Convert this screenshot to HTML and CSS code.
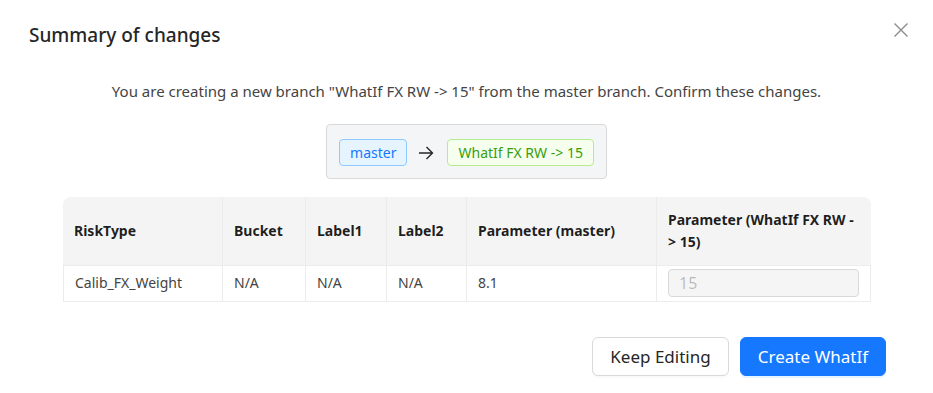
FILE: index.html
```html
<!DOCTYPE html>
<html lang="en">
<head>
    <meta charset="UTF-8">
    <meta name="viewport" content="width=device-width, initial-scale=1.0">
    <title>Summary of changes</title>
    <link rel="stylesheet" href="styles.css">
</head>
<body>

    <div class="modal">
        <div class="modal-header">
            <div class="modal-title">Summary of changes</div>
            <span class="close">
                <svg width="16" height="16" viewBox="0 0 16 16"><path d="M1.5 1.5 L14.5 14.5 M14.5 1.5 L1.5 14.5" stroke="#8c8c8c" stroke-width="1.4" fill="none"/></svg>
            </span>
        </div>

        <p class="intro">You are creating a new branch "WhatIf FX RW -&gt; 15" from the master branch. Confirm these changes.</p>

        <div class="branch-box">
            <span class="tag tag-blue">master</span>
            <svg class="arrow" width="16" height="16" viewBox="0 0 16 16"><path d="M1 8 H14.5 M8.5 2 L14.5 8 L8.5 14" stroke="#262626" stroke-width="1.4" fill="none"/></svg>
            <span class="tag tag-green">WhatIf FX RW -&gt; 15</span>
        </div>

        <table class="changes">
            <thead>
                <tr>
                    <th class="c1">RiskType</th>
                    <th class="c2">Bucket</th>
                    <th class="c3">Label1</th>
                    <th class="c4">Label2</th>
                    <th class="c5">Parameter (master)</th>
                    <th class="c6">Parameter (WhatIf FX RW -&gt; 15)</th>
                </tr>
            </thead>
            <tbody>
                <tr>
                    <td>Calib_FX_Weight</td>
                    <td>N/A</td>
                    <td>N/A</td>
                    <td>N/A</td>
                    <td>8.1</td>
                    <td class="input-cell"><input class="value" type="text" value="15" disabled></td>
                </tr>
            </tbody>
        </table>

        <div class="footer">
            <button class="btn" type="button">Keep Editing</button>
            <button class="btn btn-primary" type="button">Create WhatIf</button>
        </div>
    </div>

</body>
</html>
```

FILE: styles.css
```css
body {
    margin: 0;
    padding: 0;
    background: #fff;
    font-family: "Noto Sans", "Open Sans", sans-serif;
    color: rgba(0, 0, 0, 0.88);
    font-size: 14px;
}

.modal {
    width: 933px;
    height: 393px;
    box-sizing: border-box;
    padding: 20px 47px 0 29px;
    display: flex;
    flex-direction: column;
}

.modal-header {
    display: flex;
    justify-content: space-between;
    align-items: center;
    height: 30px;
}

.modal-title {
    font-size: 19px;
    font-weight: 500;
    color: #262626;
}

.close {
    display: flex;
    margin-right: -23px;
    margin-top: -10px;
}

.intro {
    margin: 30px 0 0 18px;
    text-align: center;
    font-size: 15px;
    color: #444;
    line-height: 22px;
}

.branch-box {
    align-self: center;
    margin: 22px 0 0 18px;
    display: flex;
    align-items: center;
    padding: 14px 12px 12px;
    background: #f4f5f7;
    border: 1px solid #d9d9d9;
    border-radius: 4px;
}

.arrow {
    margin: 0 13px 0 11px;
}

.tag {
    display: inline-block;
    height: 25px;
    line-height: 25px;
    padding: 0 10px;
    border-radius: 4px;
    font-size: 14px;
}

.tag-blue {
    background: #e6f4ff;
    border: 1px solid #91caff;
    color: #1677ff;
}

.tag-green {
    background: #f6ffed;
    border: 1px solid #b7eb8f;
    color: #389e0d;
}

.changes {
    margin: 18px 0 0 34px;
    width: 808px;
    border-collapse: separate;
    border-spacing: 0;
    font-size: 14px;
}

.changes th {
    background: #f4f4f4;
    text-align: left;
    font-weight: 700;
    line-height: 22px;
    padding: 12px 11px;
    border-bottom: 1px solid #ececec;
    border-right: 1px solid #ececec;
}

.changes th:last-child {
    border-right: none;
    border-top-right-radius: 8px;
}

.changes th:first-child {
    border-top-left-radius: 8px;
}

.changes td {
    line-height: 22px;
    padding: 6px 11px 7px;
    color: #444;
    border-bottom: 1px solid #ececec;
    border-right: 1px solid #ececec;
}

.changes td:first-child {
    border-left: 1px solid #ececec;
}

.c1 { width: 137px; }
.c2 { width: 60px; }
.c3 { width: 58px; }
.c4 { width: 57px; }
.c5 { width: 167px; }

.changes td.input-cell {
    padding: 3px 11px 4px;
}

.value {
    box-sizing: border-box;
    width: 100%;
    height: 28px;
    padding: 0 10px;
    border: 1px solid #d9d9d9;
    border-radius: 4px;
    background: #f5f5f5;
    color: rgba(0, 0, 0, 0.25);
    font-family: inherit;
    font-size: 16px;
}

.footer {
    display: flex;
    justify-content: flex-end;
    gap: 11px;
    margin-top: 35px;
}

.btn {
    height: 39px;
    padding: 0 17px;
    font-family: inherit;
    font-size: 17px;
    border-radius: 6px;
    border: 1px solid #d9d9d9;
    background: #fff;
    color: #262626;
    box-shadow: 0 2px 0 rgba(0, 0, 0, 0.02);
    cursor: pointer;
}

.btn-primary {
    background: #1677ff;
    border-color: #1677ff;
    color: #fff;
    padding: 0 17px;
    box-shadow: 0 2px 0 rgba(5, 145, 255, 0.1);
}
```
